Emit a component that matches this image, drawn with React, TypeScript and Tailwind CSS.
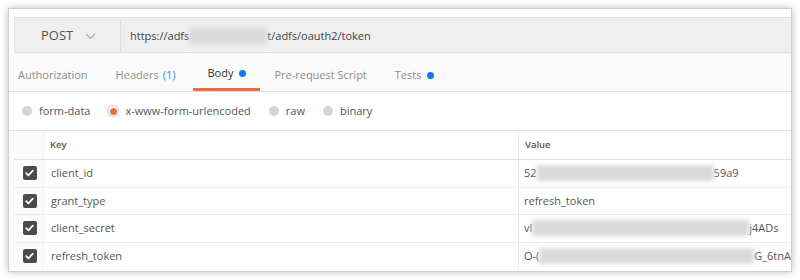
import React from 'react';

const font = { fontFamily: '"Open Sans", "Noto Sans", sans-serif' };

function Blur({ w }: { w: number }) {
  return (
    <span
      className="inline-block h-[16px] align-middle bg-[#dadada] blur-[2px]"
      style={{ width: w }}
    />
  );
}

function Check() {
  return (
    <span className="flex h-[14px] w-[14px] items-center justify-center rounded-[2px] bg-[#4b4b4b]">
      <svg width="9" height="8" viewBox="0 0 9 8">
        <path d="M1.2 4.2 L3.4 6.3 L7.8 1.6" fill="none" stroke="#fff" strokeWidth="1.7" strokeLinecap="round" strokeLinejoin="round" />
      </svg>
    </span>
  );
}

function Radio({ on, label }: { on?: boolean; label: string }) {
  return (
    <div className="flex items-center gap-[7px]">
      {on ? (
        <span className="flex h-[10px] w-[10px] items-center justify-center rounded-full bg-white ring-1 ring-[#cfcfcf]">
          <span className="h-[7px] w-[7px] rounded-full bg-[#f26b3a]" />
        </span>
      ) : (
        <span className="h-[10px] w-[10px] rounded-full bg-[#d4d4d4]" />
      )}
      <span className="text-[11px] text-[#555]">{label}</span>
    </div>
  );
}

const rows: { key: string; value: React.ReactNode }[] = [
  { key: 'client_id', value: <>52<Blur w={177} />59a9</> },
  { key: 'grant_type', value: <>refresh_token</> },
  { key: 'client_secret', value: <>vl<Blur w={217} />j4ADs</> },
  { key: 'refresh_token', value: <>O-(<Blur w={231} />G_6tnA</> },
];

export default function App() {
  return (
    <div className="h-[280px] w-[800px] bg-white pl-[8px] pt-[8px]" style={font}>
      <div className="h-[264px] w-[784px] overflow-hidden border border-[#cfcfcf] bg-white shadow-[0_0_7px_rgba(0,0,0,0.28)]">
        {/* request bar */}
        <div className="pl-[5px] pt-[8px]">
          <div className="flex h-[36px] border border-r-0 border-[#dedede] bg-[#efefef] pt-[2px]">
            <div className="flex w-[106px] items-center border-r border-[#dedede] pl-[26px]">
              <span className="text-[13px] text-[#555]">POST</span>
              <svg className="ml-[12px]" width="11" height="7" viewBox="0 0 11 7">
                <path d="M1 1 L5.5 5.5 L10 1" fill="none" stroke="#aaa" strokeWidth="1.2" />
              </svg>
            </div>
            <div className="flex items-center pl-[9px] text-[11px] text-[#444]">
              https://adfs<Blur w={78} />t/adfs/oauth2/token
            </div>
          </div>
        </div>

        {/* tabs */}
        <div className="flex h-[39px] items-stretch border-b border-[#dedede] bg-[#fafafa] pl-[9px] text-[11px]">
          <div className="flex items-center pt-[6px] pr-[28px] text-[#8e8e8e]">Authorization</div>
          <div className="flex items-center pt-[6px] pr-[18px] text-[#8e8e8e]">
            Headers <span className="ml-[4px] text-[#2b8bf2]">(1)</span>
          </div>
          <div className="flex items-center border-b-[3px] border-[#f26b3a] px-[14px] pt-[6px] text-[#333]">
            Body <span className="ml-[6px] h-[7px] w-[7px] rounded-full bg-[#097bed]" />
          </div>
          <div className="flex items-center pt-[6px] pl-[14px] pr-[28px] text-[#8e8e8e]">Pre-request Script</div>
          <div className="flex items-center pt-[6px] text-[#8e8e8e]">
            Tests <span className="ml-[6px] h-[7px] w-[7px] rounded-full bg-[#097bed]" />
          </div>
        </div>

        {/* body type */}
        <div className="flex h-[38px] items-center gap-[18px] pl-[13px]">
          <Radio label="form-data" />
          <Radio on label="x-www-form-urlencoded" />
          <Radio label="raw" />
          <Radio label="binary" />
        </div>

        {/* params table */}
        <div className="border-t border-[#e2e2e2] pl-[5px] bg-[#fbfbfb]">
          <div className="flex h-[29px] border-b border-[#e2e2e2]">
            <div className="w-[29px]" />
            <div className="flex w-[475px] items-center border-l border-[#f0f0f0] bg-white pl-[6px] text-[9.5px] font-semibold text-[#555]">Key</div>
            <div className="flex flex-1 items-center border-l border-[#eaeaea] bg-white pl-[6px] text-[9.5px] font-semibold text-[#555]">Value</div>
          </div>
          {rows.map((r, i) => (
            <div key={i} className={`flex h-[27.5px] ${i < rows.length - 1 ? 'border-b border-[#ececec]' : ''}`}>
              <div className="flex w-[29px] items-center justify-center pl-[2px]">
                <Check />
              </div>
              <div className="flex w-[475px] items-center border-l border-[#f0f0f0] bg-white pl-[7px] text-[11px] text-[#555]">{r.key}</div>
              <div className="flex flex-1 items-center overflow-hidden whitespace-nowrap border-l border-[#eaeaea] bg-white pl-[5px] text-[11px] text-[#555]">
                {r.value}
              </div>
            </div>
          ))}
        </div>
      </div>
    </div>
  );
}
